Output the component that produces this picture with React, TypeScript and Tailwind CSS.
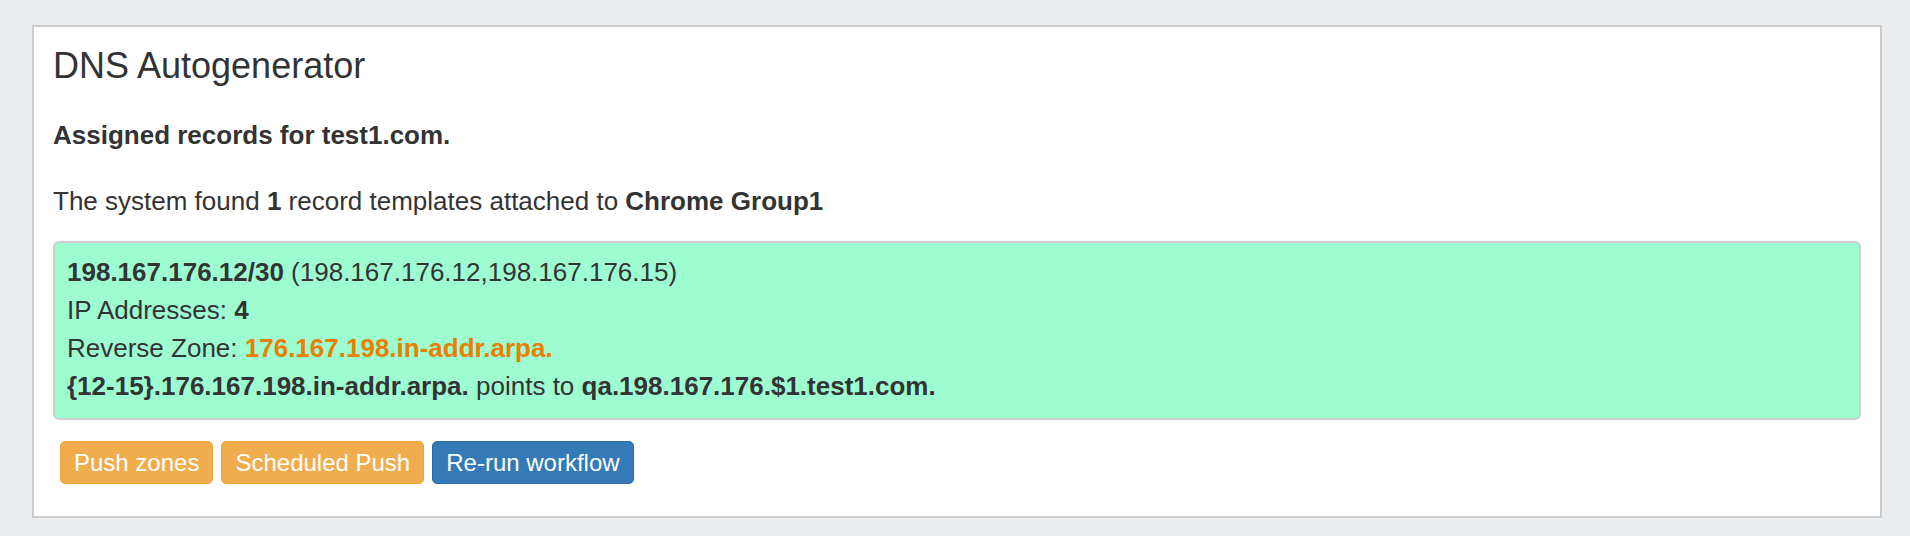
import React from 'react';

const records = [
  { cidr: '198.167.176.12/30', range: '198.167.176.12,198.167.176.15', count: 4, zone: '176.167.198.in-addr.arpa.', ptr: '{12-15}.176.167.198.in-addr.arpa.', target: 'qa.198.167.176.$1.test1.com.' }
];

const Btn = ({ children, kind }: { children: React.ReactNode; kind: 'warn' | 'primary' }) => (
  <button
    className={
      kind === 'warn'
        ? 'h-[43px] px-[13px] rounded-[5px] border border-[#eea236] bg-[#f0ad4e] text-white text-[24px] leading-none'
        : 'h-[43px] px-[13px] rounded-[5px] border border-[#2e6da4] bg-[#337ab7] text-white text-[24px] leading-none'
    }
  >
    {children}
  </button>
);

const App = () => {
  return <div className="min-h-[536px] bg-[#e9edf0] pt-[25px] font-['Liberation_Sans',Arial,sans-serif] text-[#333333]">
      <div className="ml-[32px] w-[1850px] border-2 border-[#cccccc] bg-white px-[19px] pt-[19px] pb-[32px]">
        <h3 className="text-[36px] leading-[40px]">DNS Autogenerator</h3>
        <p className="mt-[30px] text-[26px] leading-[38px] font-bold">Assigned records for test1.com.</p>
        <p className="mt-[28px] text-[26px] leading-[38px]">
          The system found <b>{records.length}</b> record templates attached to <b>Chrome Group1</b>
        </p>
        {records.map(r => <div key={r.cidr} className="mt-[21px] rounded-[6px] border-2 border-[#cdcdcd] bg-[#9dfdd1] pl-[12px] pr-[12px] pt-[10px] pb-[13px] text-[26px] leading-[38px]">
            <div><b>{r.cidr}</b> ({r.range})</div>
            <div>IP Addresses: <b>{r.count}</b></div>
            <div>Reverse Zone: <b className="text-[#e87f00]">{r.zone}</b></div>
            <div><b>{r.ptr}</b> points to <b>{r.target}</b></div>
          </div>)}
        <div className="mt-[21px] ml-[7px] flex gap-[8px]">
          <Btn kind="warn">Push zones</Btn>
          <Btn kind="warn">Scheduled Push</Btn>
          <Btn kind="primary">Re-run workflow</Btn>
        </div>
      </div>
    </div>;
};

export default App;
